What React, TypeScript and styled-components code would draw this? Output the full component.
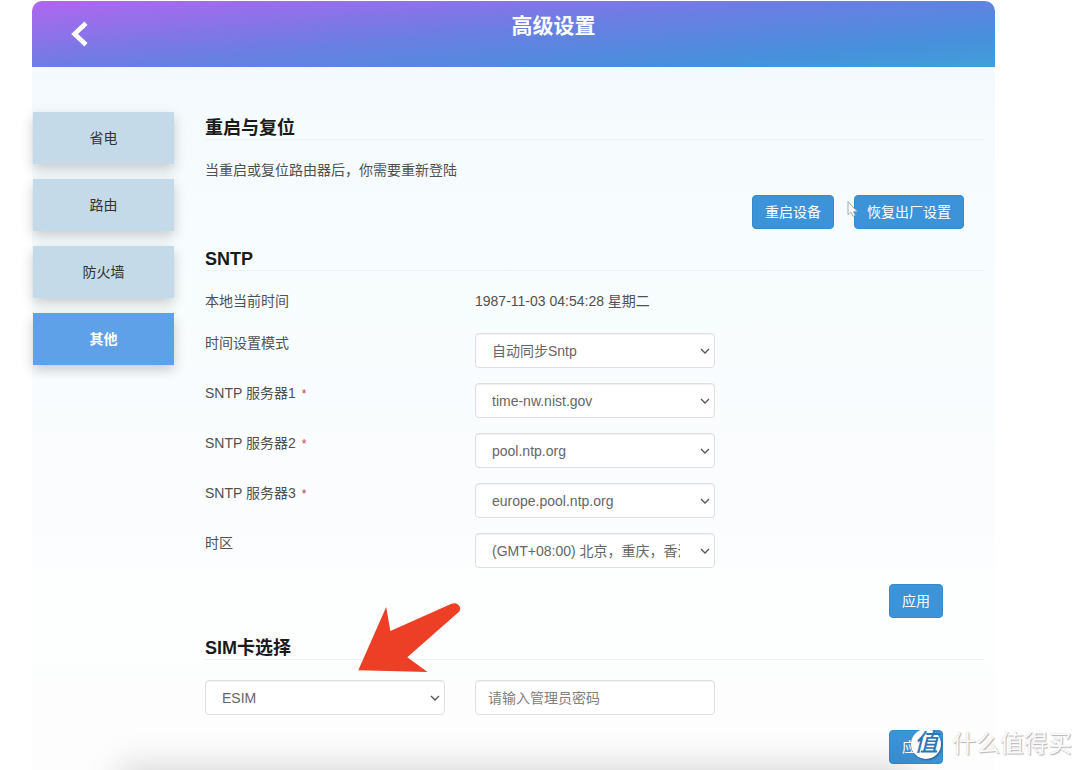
import React, { useState } from 'react';
import styled, { createGlobalStyle, css } from 'styled-components';

const GlobalStyle = createGlobalStyle`
  *, *::before, *::after { box-sizing: border-box; }
  body {
    margin: 0;
    background: #fff;
    color: #505050;
    font-family: "Liberation Sans", "Noto Sans CJK SC", sans-serif;
    font-size: 14px;
    line-height: 20px;
  }
  button, input, select { font: inherit; margin: 0; }
`;

const Page = styled.div`
  position: relative;
  padding: 1px 85px 0 32px;
`;

const Header = styled.header`
  display: grid;
  grid-template-columns: 80px 1fr;
  height: 66px;
  border-radius: 10px 10px 0 0;
  background: linear-gradient(175deg, #b066ef 0%, #687fe2 48%, #4690dc 80%, #41a0d8 100%);
`;

const BackButton = styled.button`
  display: flex;
  align-items: center;
  justify-content: flex-end;
  padding: 0 24px 0 0;
  border: 0;
  background: none;
  cursor: pointer;
`;

const Title = styled.h1`
  margin: 0;
  padding-top: 9px;
  color: #fff;
  font-size: 21px;
  line-height: 32px;
  text-align: center;
`;

const Panel = styled.div`
  display: flex;
  align-items: flex-start;
  gap: 31px;
  padding: 45px 11px 6px 1px;
  background: linear-gradient(#f4f9fd 0, #f7fdfe 180px, #fbfcfe 440px, #fdfefe 520px, #fdfdfd 700px);
`;

const SideNav = styled.nav`
  display: flex;
  flex: 0 0 141px;
  flex-direction: column;
  gap: 15px;
`;

const NavItem = styled.button<{ $active?: boolean }>`
  height: 52px;
  border: 0;
  background: #c4dae8;
  color: #333;
  box-shadow: 0 5px 12px rgba(0, 0, 0, 0.2);
  cursor: pointer;
  ${(p) =>
    p.$active &&
    css`
      background: #5fa1e9;
      color: #fff;
      font-weight: 700;
    `}
`;

const Content = styled.main`
  flex: 1;
  min-width: 0;
  padding-top: 6px;
`;

const Section = styled.section`
  & + & { margin-top: 20px; }
`;

const Heading = styled.h2`
  margin: 0 0 20px;
  border-bottom: 1px solid #eef2f4;
  color: #1a1a1a;
  font-size: 18px;
  line-height: 21px;
`;

const Note = styled.p`
  margin: 0;
`;

const Actions = styled.div<{ $inset: number }>`
  display: flex;
  justify-content: flex-end;
  gap: 20px;
  margin-top: 15px;
  padding-right: ${(p) => p.$inset}px;
`;

const ActionButton = styled.button`
  height: 34px;
  padding: 0 12px;
  border: 1px solid #348bcb;
  border-radius: 4px;
  background: #3c93d7;
  color: #fff;
  cursor: pointer;
`;

const Row = styled.div`
  display: grid;
  grid-template-columns: 240px 240px;
  column-gap: 30px;
`;

const TimeRow = styled(Row)`
  margin-bottom: 22px;
`;

const Fields = styled.div`
  display: grid;
  row-gap: 15px;
  padding-bottom: 1px;
`;

const Required = styled.span`
  margin-left: 6px;
  color: #cc3a3a;
  font-size: 12px;
`;

const SelectBox = styled.div`
  position: relative;
`;

const controlStyle = css`
  width: 100%;
  height: 35px;
  border: 1px solid #dedfe1;
  border-radius: 4px;
  background: #fff;
  color: #666;
  box-shadow: inset 0 1px 1px rgba(0, 0, 0, 0.06);
`;

const SelectControl = styled.select`
  ${controlStyle}
  display: block;
  appearance: none;
  padding: 0 34px 0 16px;
`;

const Chevron = styled.svg`
  position: absolute;
  top: 14px;
  right: 5px;
  pointer-events: none;
`;

const TextInput = styled.input`
  ${controlStyle}
  padding: 0 12px;
  &::placeholder { color: #808080; opacity: 1; }
`;

const BottomShade = styled.div`
  position: absolute;
  right: 0;
  bottom: 0;
  left: 0;
  height: 60px;
  overflow: hidden;
  pointer-events: none;
  &::after {
    content: "";
    position: absolute;
    top: 100%;
    right: 172px;
    left: 124px;
    height: 40px;
    box-shadow: 0 0 34px 5px rgba(0, 0, 0, 0.15);
  }
`;

const Overlay = styled.svg<{ $left: number; $top: number }>`
  position: absolute;
  left: ${(p) => p.$left}px;
  top: ${(p) => p.$top}px;
  pointer-events: none;
`;

const Watermark = styled.div`
  position: absolute;
  right: 8px;
  bottom: 10px;
  display: flex;
  align-items: center;
  gap: 11px;
  color: #fafafa;
  font-size: 24px;
  line-height: 32px;
  text-shadow: 1px 1px 1px #b4b4b4, 0 0 1px #ccc;
  white-space: nowrap;
  pointer-events: none;
`;

const Badge = styled.span`
  width: 30px;
  height: 30px;
  border-radius: 50%;
  background: #fff;
  color: #2d78b4;
  box-shadow: 1px 1px 2px rgba(0, 0, 0, 0.35);
  font-size: 24px;
  font-style: italic;
  font-weight: 500;
  line-height: 28px;
  text-align: center;
  text-shadow: none;
`;

interface SelectProps {
  id?: string;
  label?: string;
  options: string[];
}

function Select({ id, label, options }: SelectProps) {
  return (
    <SelectBox>
      <SelectControl id={id} aria-label={label}>
        {options.map((o) => (
          <option key={o}>{o}</option>
        ))}
      </SelectControl>
      <Chevron width="10" height="8" viewBox="0 0 10 8" fill="none" stroke="#555" strokeWidth="1.3">
        <path d="M1 2 L5 6 L9 2" />
      </Chevron>
    </SelectBox>
  );
}

const navItems = ['省电', '路由', '防火墙', '其他'];

const fields = [
  { id: 'mode', label: '时间设置模式', required: false, options: ['自动同步Sntp'] },
  { id: 'server1', label: 'SNTP 服务器1', required: true, options: ['time-nw.nist.gov'] },
  { id: 'server2', label: 'SNTP 服务器2', required: true, options: ['pool.ntp.org'] },
  { id: 'server3', label: 'SNTP 服务器3', required: true, options: ['europe.pool.ntp.org'] },
  { id: 'zone', label: '时区', required: false, options: ['(GMT+08:00) 北京，重庆，香港'] },
];

export default function App() {
  const [active, setActive] = useState('其他');
  return (
    <>
      <GlobalStyle />
      <Page>
        <Header>
          <BackButton aria-label="返回">
            <svg width="18" height="26" viewBox="0 0 18 26" fill="none" stroke="#fff" strokeWidth="4.6">
              <path d="M16 2.2 L4.5 13 L16 23.8" strokeLinejoin="miter" />
            </svg>
          </BackButton>
          <Title>高级设置</Title>
        </Header>
        <Panel>
          <SideNav>
            {navItems.map((n) => (
              <NavItem key={n} $active={n === active} onClick={() => setActive(n)}>
                {n}
              </NavItem>
            ))}
          </SideNav>
          <Content>
            <Section>
              <Heading>重启与复位</Heading>
              <Note>当重启或复位路由器后，你需要重新登陆</Note>
              <Actions $inset={20}>
                <ActionButton>重启设备</ActionButton>
                <ActionButton>恢复出厂设置</ActionButton>
              </Actions>
            </Section>
            <Section>
              <Heading>SNTP</Heading>
              <TimeRow>
                <span>本地当前时间</span>
                <span>1987-11-03 04:54:28 星期二</span>
              </TimeRow>
              <Fields>
                {fields.map((f) => (
                  <Row key={f.id}>
                    <label htmlFor={f.id}>
                      {f.label}
                      {f.required && <Required>*</Required>}
                    </label>
                    <Select id={f.id} options={f.options} />
                  </Row>
                ))}
              </Fields>
              <Actions $inset={41}>
                <ActionButton>应用</ActionButton>
              </Actions>
            </Section>
            <Section>
              <Heading>SIM卡选择</Heading>
              <Row>
                <Select label="SIM卡选择" options={['ESIM']} />
                <TextInput type="password" aria-label="管理员密码" placeholder="请输入管理员密码" />
              </Row>
              <Actions $inset={41}>
                <ActionButton>应用</ActionButton>
              </Actions>
            </Section>
          </Content>
        </Panel>
        <BottomShade />
        <Overlay $left={357} $top={602} width="106" height="72" viewBox="357 602 106 72">
          <path
            fill="#ec3f26"
            d="M358.3 670.3 L386.2 607 L390.4 631 L451.5 603.8 C456 602 460.2 605 460.2 608.8 C460.2 610.6 459 612 457.6 613 L407.3 657.3 L427.5 672 Z"
          />
        </Overlay>
        <Overlay $left={846} $top={200} width="14" height="19" viewBox="0 0 14 19">
          <path d="M2 1.5 V14.6 L5 12 L7.2 16.4 L9.2 15.4 L7.4 11.4 H11 Z" fill="#fff" stroke="#aaa" strokeWidth="1" />
        </Overlay>
        <Watermark>
          <Badge>值</Badge>
          <span>什么值得买</span>
        </Watermark>
      </Page>
    </>
  );
}
